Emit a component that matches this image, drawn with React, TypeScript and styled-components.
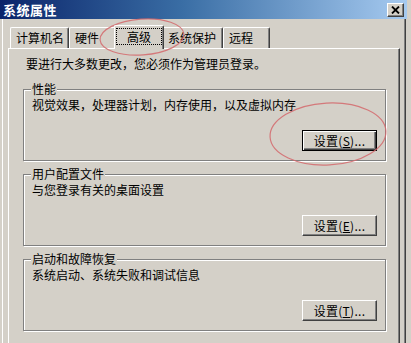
import styled, { createGlobalStyle } from "styled-components";

const GlobalStyle = createGlobalStyle`
  html, body {
    margin: 0;
    background: #d4d0c8;
  }
  body {
    font-family: "Noto Sans CJK SC", "Noto Sans", sans-serif;
    font-size: 12px;
    color: #000;
  }
`;

const Window = styled.div`
  position: relative;
  width: 411px;
  height: 343px;
  overflow: hidden;
  display: flex;
  flex-direction: column;
  background: #d4d0c8;
`;

const TitleBar = styled.div`
  width: 407px;
  height: 19px;
  flex: none;
  box-sizing: border-box;
  padding: 0 3px 0 3px;
  display: flex;
  align-items: center;
  justify-content: space-between;
  background: linear-gradient(to right, #0a246a 0%, #3a6ea5 45%, #a6caf0 100%);
`;

const Title = styled.span`
  color: #fff;
  font-weight: bold;
  font-size: 13px;
  line-height: 19px;
  letter-spacing: 0.5px;
`;

const CloseButton = styled.div`
  width: 17px;
  height: 14px;
  box-sizing: border-box;
  background: #d4d0c8;
  border: 1px solid;
  border-color: #fff #404040 #404040 #fff;
  box-shadow: inset -1px -1px #808080;
  display: flex;
  align-items: center;
  justify-content: center;
`;

const Body = styled.div`
  flex: 1;
  width: 404px;
  margin-left: 2px;
  box-sizing: border-box;
  border-left: 1px solid #fff;
  border-right: 1px solid #404040;
  box-shadow: inset -1px 0 #808080;
  padding: 6px 0 0 5px;
  display: flex;
  flex-direction: column;
`;

const TabRow = styled.div`
  display: flex;
  align-items: flex-end;
  height: 23px;
  padding-left: 2px;
`;

const Tab = styled.div<{ $w: number; $active?: boolean }>`
  position: relative;
  width: ${({ $w }) => $w}px;
  height: ${({ $active }) => ($active ? 24 : 21)}px;
  box-sizing: border-box;
  margin: ${({ $active }) => ($active ? "0 -2px -1px" : "0")};
  z-index: ${({ $active }) => ($active ? 1 : 0)};
  background: #d4d0c8;
  border-top: 1px solid #fff;
  border-left: 1px solid #fff;
  border-right: 1px solid #404040;
  border-radius: 2px 2px 0 0;
  box-shadow: inset -1px 0 #808080;
  display: flex;
  align-items: center;
  justify-content: ${({ $active }) => ($active ? "center" : "flex-start")};
  padding-left: ${({ $active }) => ($active ? 0 : 5)}px;
  padding-bottom: ${({ $active }) => ($active ? 2 : 0)}px;
  font-size: 12px;
  line-height: 16px;
`;

const FocusLabel = styled.span`
  border: 1px dotted #000;
  padding: 0 10px;
  line-height: 15px;
`;

const Panel = styled.div`
  position: relative;
  z-index: 0;
  flex: 1;
  width: 392px;
  box-sizing: border-box;
  border-top: 1px solid #fff;
  border-left: 1px solid #fff;
  border-right: 1px solid #404040;
  box-shadow: inset -1px 0 #808080;
  padding: 7px 0 0 14px;
`;

const Intro = styled.div`
  padding-left: 3px;
  line-height: 16px;
`;

const Group = styled.fieldset<{ $first?: boolean }>`
  width: 363px;
  box-sizing: border-box;
  margin: ${({ $first }) => ($first ? 10 : 6)}px 0 0 0;
  padding: 1px 8px 9px 8px;
  border: 1px solid #808080;
  box-shadow: inset 1px 1px #fff, 1px 1px #fff;
  min-inline-size: 0;
`;

const Legend = styled.legend`
  padding: 0 1px;
  margin-left: -1px;
  line-height: 14px;
  background: #d4d0c8;
`;

const Desc = styled.div`
  line-height: 16px;
  white-space: nowrap;
`;

const ButtonRow = styled.div`
  display: flex;
  justify-content: flex-end;
  margin-top: 17px;
`;

const Button = styled.button<{ $default?: boolean }>`
  width: 75px;
  height: 21px;
  box-sizing: border-box;
  padding: 0;
  font-family: inherit;
  font-size: 12px;
  color: #000;
  background: #d4d0c8;
  border: 1px solid;
  border-color: ${({ $default }) =>
    $default ? "#000" : "#fff #404040 #404040 #fff"};
  box-shadow: ${({ $default }) =>
    $default
      ? "inset 1px 1px #fff, inset -1px -1px #404040, inset -2px -2px #808080"
      : "inset -1px -1px #808080"};
  line-height: 17px;
  text-align: center;
  letter-spacing: 0.3px;
`;

const Overlay = styled.svg`
  position: absolute;
  left: 0;
  top: 0;
  pointer-events: none;
`;

const groups = [
  {
    label: "性能",
    desc: "视觉效果，处理器计划，内存使用，以及虚拟内存",
    key: "S",
    isDefault: true,
  },
  { label: "用户配置文件", desc: "与您登录有关的桌面设置", key: "E" },
  { label: "启动和故障恢复", desc: "系统启动、系统失败和调试信息", key: "T" },
];

const tabs = [
  { label: "计算机名", w: 59 },
  { label: "硬件", w: 47 },
  { label: "高级", w: 50, active: true },
  { label: "系统保护", w: 61 },
  { label: "远程", w: 47 },
];

export default function App() {
  return (
    <>
      <GlobalStyle />
      <Window>
        <TitleBar>
          <Title>系统属性</Title>
          <CloseButton>
            <svg width="9" height="8" viewBox="0 0 9 8">
              <path d="M1 0.5 L8 7.5 M8 0.5 L1 7.5" stroke="#000" strokeWidth="1.8" />
            </svg>
          </CloseButton>
        </TitleBar>
        <Body>
          <TabRow>
            {tabs.map((t) => (
              <Tab key={t.label} $w={t.w} $active={t.active}>
                {t.active ? <FocusLabel>{t.label}</FocusLabel> : t.label}
              </Tab>
            ))}
          </TabRow>
          <Panel>
            <Intro>要进行大多数更改，您必须作为管理员登录。</Intro>
            {groups.map((g, i) => (
              <Group key={g.label} $first={i === 0}>
                <Legend>{g.label}</Legend>
                <Desc>{g.desc}</Desc>
                <ButtonRow>
                  <Button $default={g.isDefault}>
                    设置(<u>{g.key}</u>)...
                  </Button>
                </ButtonRow>
              </Group>
            ))}
          </Panel>
        </Body>
        <Overlay width="411" height="343" viewBox="0 0 411 343">
          <ellipse
            cx="142"
            cy="37"
            rx="42"
            ry="18"
            transform="rotate(-4 142 37)"
            fill="none"
            stroke="#d4686c"
            strokeWidth="1.2"
            opacity="0.85"
          />
          <ellipse
            cx="328"
            cy="134"
            rx="58"
            ry="31"
            transform="rotate(-3 328 134)"
            fill="none"
            stroke="#d4686c"
            strokeWidth="1.2"
            opacity="0.85"
          />
        </Overlay>
      </Window>
    </>
  );
}
